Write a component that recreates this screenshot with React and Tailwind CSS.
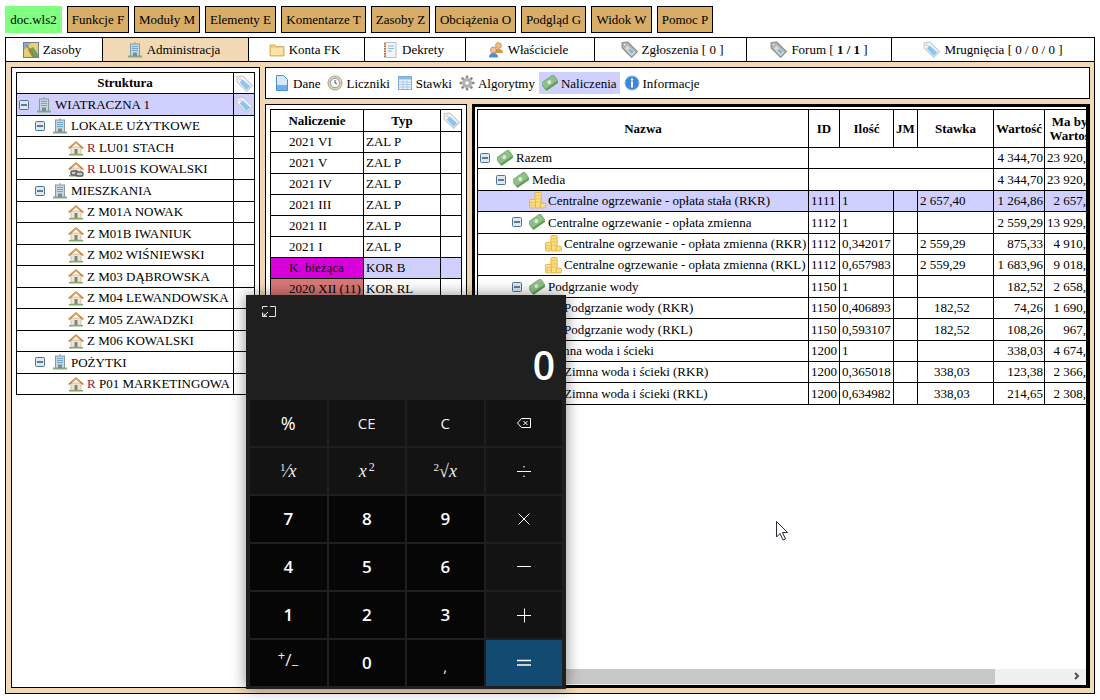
import React from 'react'

const Ground = () => <path d="M1 14h14v1.5H1z" fill="#6fae5a" />

function Building({ className = '' }) {
  return (
    <svg width="16" height="16" viewBox="0 0 16 16" className={`shrink-0 ${className}`}>
      <path d="M8 0v2" stroke="#b98a5a" />
      <path d="M1 13.500h14V15.500H1z" fill="#7fb26a" />
      <rect x="3.500" y="2" width="9" height="12" fill="#c4d6df" stroke="#8a9aa3" />
      <path d="M5 4.500h6M5 6.500h6M5 8.500h6" stroke="#6fa8cf" />
      <rect x="6" y="10.500" width="4" height="3.500" fill="#7d8a90" />
    </svg>
  )
}

function House({ chain }) {
  return (
    <svg width="16" height="16" viewBox="0 0 16 16" className="shrink-0">
      <Ground />
      <rect x="3" y="7" width="10" height="7" fill="#efe6d2" stroke="#b8a98c" strokeWidth=".6" />
      <rect x="6.500" y="9" width="3" height="5" fill="#7d8580" />
      <path d="M0 8 8 1l8 7-1.500 1L8 3.500 1.500 9z" fill="#c9843f" />
      <path d="M3 6.500 8 2l5 4.500L8 3.800z" fill="#e8b070" />
      {chain ? (
        <g fill="none" stroke="#5d6468" strokeWidth="1.400">
          <rect x="3" y="10" width="6" height="4" rx="2" fill="#c7cbcc" />
          <rect x="8" y="11" width="7" height="4" rx="2" fill="#c7cbcc" />
        </g>
      ) : null}
    </svg>
  )
}

function Coins() {
  return (
    <svg width="17" height="17" viewBox="0 0 16 16" className="-my-px -mr-px shrink-0">
      <g stroke="#e2ad35" strokeWidth=".8" fill="#fadf85">
        <rect x="5.500" y=".5" width="6" height="14.500" rx="1" />
        <rect x=".5" y="7" width="5.500" height="8" rx="1" />
        <rect x="10.500" y="10.500" width="5" height="4.500" rx="1" />
      </g>
      <path d="M6 3.500h5M6 6.500h5M6 9.500h5M1 10h4.500M1 12.500h4.500" stroke="#ebbb4a" strokeWidth=".8" />
    </svg>
  )
}

function Money() {
  return (
    <svg width="16" height="16" viewBox="0 0 16 16" className="shrink-0">
      <g transform="rotate(-35 8 8)">
        <rect x="0.500" y="6" width="15" height="6.500" fill="#659a5f" />
        <rect x="0.500" y="3" width="15" height="7.500" fill="#8fc088" stroke="#6f9f68" strokeWidth=".7" />
        <circle cx="8" cy="6.800" r="2" fill="#d5ead0" />
      </g>
    </svg>
  )
}

function Tag({ grey }) {
  return (
    <svg width="17" height="17" viewBox="0 0 16 16" className="-my-px shrink-0">
      <path
        d="M1 1.500 6.500 1 15.500 10 10 15.500 1 6.500z"
        fill={grey ? '#b0b0b0' : '#f4f6f8'}
        stroke={grey ? '#8d8d8d' : '#c6c6c6'}
        strokeLinejoin="round"
      />
      <path d="M6 4 13.500 10.500 10 14 3.500 7z" fill={grey ? '#d8d8d8' : '#8cc6f0'} />
      {grey ? <path d="M8.500 7 12 10 10 12 7 9z" fill="#7fb6de" /> : null}
      <circle cx="3.500" cy="3.500" r="1" fill="#fff" stroke="#b0b0b0" strokeWidth=".5" />
    </svg>
  )
}

function Toggle() {
  return (
    <svg width="10" height="10" viewBox="0 0 10 10" className="shrink-0">
      <rect x=".5" y=".5" width="9" height="9" rx="1" fill="#dce8f2" stroke="#4f7390" />
      <path d="M2 5h6" stroke="#1e2e3a" strokeWidth="1.200" />
    </svg>
  )
}

const MapIcon = () => (
  <svg width="16" height="16" viewBox="0 0 16 16" className="shrink-0">
    <rect x=".5" y=".5" width="15" height="15" fill="#e8d070" stroke="#77808a" />
    <path d="M1 1h7L1 8z" fill="#7cb3d8" />
    <path d="M9 15 5 8l5-3 5 7v3z" fill="#6ba55c" />
    <path d="M3 3 8 9l3 6" stroke="#d0603a" strokeWidth="1.200" fill="none" />
  </svg>
)

const Folder = () => (
  <svg width="16" height="16" viewBox="0 0 16 16" className="shrink-0">
    <path d="M1 3h5l1 1.500h8V14H1z" fill="#f3cf78" stroke="#cfa24c" strokeWidth=".8" />
    <rect x="2" y="6" width="12" height="7" fill="#fbe5a6" />
  </svg>
)

const Notebook = () => (
  <svg width="16" height="16" viewBox="0 0 16 16" className="shrink-0">
    <rect x="3" y="0.500" width="11" height="15" fill="#f5f5f2" stroke="#b9bec2" />
    <path d="M3 1v14" stroke="#b9713a" strokeWidth="2" strokeDasharray="1.500 1" />
    <path d="M6 4h6M6 6.500h6M6 9h4" stroke="#8cb4d6" strokeWidth="1.200" />
  </svg>
)

const Users = () => (
  <svg width="16" height="16" viewBox="0 0 16 16" className="shrink-0">
    <circle cx="10.500" cy="3.500" r="3" fill="#eebd8f" stroke="#b57f3d" strokeWidth=".6" />
    <path d="M6.500 11c0-3 1.500-4 4-4s4.500 1 4.500 4z" fill="#d99a3d" />
    <circle cx="5.500" cy="8" r="3" fill="#f0c49c" stroke="#a85f3a" strokeWidth=".6" />
    <path d="M1 15.500c0-3 1.500-4.500 4.500-4.500s4.500 1.500 4.500 4.500z" fill="#4f8fd0" />
  </svg>
)

const DocIcon = () => (
  <svg width="16" height="16" viewBox="0 0 16 16" className="shrink-0">
    <path d="M2.500.5h7l4 4v11h-11z" fill="#d7e9f8" stroke="#4f8fd0" />
    <rect x="3" y="10" width="10" height="5" fill="#6fb0e6" />
  </svg>
)

const ClockIcon = () => (
  <svg width="16" height="16" viewBox="0 0 16 16" className="shrink-0">
    <circle cx="8" cy="8" r="7" fill="#e7d8a8" stroke="#a8a080" />
    <circle cx="8" cy="8" r="4.700" fill="#f6f8fb" stroke="#8398b0" />
    <path d="M8 5v3l2 1" stroke="#44566a" fill="none" />
  </svg>
)

const TableIcon = () => (
  <svg width="16" height="16" viewBox="0 0 16 16" className="shrink-0">
    <rect x="1.500" y="1.500" width="13" height="13" fill="#eef5fb" stroke="#82aed4" />
    <rect x="2" y="2" width="12" height="2.500" fill="#8cbce6" />
    <path d="M2 7h12M2 9.500h12M2 12h12M6 5v9M10 5v9" stroke="#a8c8e4" />
  </svg>
)

const GearIcon = () => (
  <svg width="16" height="16" viewBox="0 0 16 16" className="shrink-0">
    <g stroke="#8d8d8d" strokeWidth="2.400">
      <path d="M8 .5v15M.5 8h15M2.700 2.700l10.600 10.600M13.300 2.700 2.700 13.300" />
    </g>
    <circle cx="8" cy="8" r="5" fill="#b5b5b5" />
    <circle cx="8" cy="8" r="2.300" fill="#fff" stroke="#8d8d8d" strokeWidth=".6" />
  </svg>
)

const InfoIcon = () => (
  <svg width="16" height="16" viewBox="0 0 16 16" className="shrink-0">
    <circle cx="8" cy="8" r="7" fill="#3f86d8" stroke="#8ab6e6" />
    <circle cx="8" cy="4.500" r="1.200" fill="#fff" />
    <rect x="7" y="6.500" width="2" height="6" fill="#fff" />
  </svg>
)

const menu = [
  ['Funkcje F', 'w-[62px]'],
  ['Moduły M', 'w-[66px]'],
  ['Elementy E', 'w-[71px]'],
  ['Komentarze T', 'w-[85px]'],
  ['Zasoby Z', 'w-[59px]'],
  ['Obciążenia O', 'w-[81px]'],
  ['Podgląd G', 'w-[65px]'],
  ['Widok W', 'w-[61px]'],
  ['Pomoc P', 'w-[56px]'],
]

const tabs = [
  { label: 'Zasoby', icon: <MapIcon />, w: 'w-[97px] pr-[4px]' },
  { label: 'Administracja', icon: <Building />, w: 'w-[146px] pr-[4px]', active: true },
  { label: 'Konta FK', icon: <Folder />, w: 'w-[116px] pr-[4px]' },
  { label: 'Dekrety', icon: <Notebook />, w: 'w-[101px] pr-[4px]' },
  { label: 'Właściciele', icon: <Users />, w: 'w-[129px] pr-[4px]' },
  { label: <>Zgłoszenia [ 0 ]</>, icon: <Tag grey />, w: 'w-[152px] pl-[3px]' },
  { label: <>Forum [ <b>1 / 1</b> ]</>, icon: <Tag grey />, w: 'w-[145px]' },
  { label: <>Mrugnięcia [ 0 / 0 / 0 ]</>, icon: <Tag />, w: 'flex-1' },
]

const tools = [
  { label: 'Dane', icon: <DocIcon /> },
  { label: 'Liczniki', icon: <ClockIcon /> },
  { label: 'Stawki', icon: <TableIcon /> },
  { label: 'Algorytmy', icon: <GearIcon /> },
  { label: 'Naliczenia', icon: <Money />, active: true },
  { label: 'Informacje', icon: <InfoIcon /> },
]

const tree = [
  { level: 0, toggle: true, icon: <Building />, text: 'WIATRACZNA 1', selected: true },
  { level: 1, toggle: true, icon: <Building />, text: 'LOKALE UŻYTKOWE' },
  { level: 2, icon: <House />, r: 'R', text: 'LU01 STACH' },
  { level: 2, icon: <House chain />, r: 'R', text: 'LU01S KOWALSKI' },
  { level: 1, toggle: true, icon: <Building />, text: 'MIESZKANIA' },
  { level: 2, icon: <House />, text: 'Z M01A NOWAK' },
  { level: 2, icon: <House />, text: 'Z M01B IWANIUK' },
  { level: 2, icon: <House />, text: 'Z M02 WIŚNIEWSKI' },
  { level: 2, icon: <House />, text: 'Z M03 DĄBROWSKA' },
  { level: 2, icon: <House />, text: 'Z M04 LEWANDOWSKA' },
  { level: 2, icon: <House />, text: 'Z M05 ZAWADZKI' },
  { level: 2, icon: <House />, text: 'Z M06 KOWALSKI' },
  { level: 1, toggle: true, icon: <Building />, text: 'POŻYTKI' },
  { level: 2, icon: <House />, r: 'R', text: 'P01 MARKETINGOWA' },
]

const periods = [
  ['2021 VI', 'ZAL P'],
  ['2021 V', 'ZAL P'],
  ['2021 IV', 'ZAL P'],
  ['2021 III', 'ZAL P'],
  ['2021 II', 'ZAL P'],
  ['2021 I', 'ZAL P'],
  ['K. bieżąca', 'KOR B', 'bg-[#d800d8]', 'bg-[#d0d0ff]'],
  ['2020 XII (11)', 'KOR RL', 'bg-[#d87878]', ''],
]

const charges = [
  { level: 0, toggle: true, icon: <Money />, name: 'Razem', total: '4 344,70', due: '23 920,05', merged: true },
  { level: 1, toggle: true, icon: <Money />, name: 'Media', total: '4 344,70', due: '23 920,05', merged: true },
  { level: 2, icon: <Coins />, name: 'Centralne ogrzewanie - opłata stała (RKR)', id: '1111', qty: '1', rate: '2 657,40', total: '1 264,86', due: '2 657,40', selected: true },
  { level: 2, toggle: true, icon: <Money />, name: 'Centralne ogrzewanie - opłata zmienna', id: '1112', qty: '1', total: '2 559,29', due: '13 929,24' },
  { level: 3, icon: <Coins />, name: 'Centralne ogrzewanie - opłata zmienna (RKR)', id: '1112', qty: '0,342017', rate: '2 559,29', total: '875,33', due: '4 910,58' },
  { level: 3, icon: <Coins />, name: 'Centralne ogrzewanie - opłata zmienna (RKL)', id: '1112', qty: '0,657983', rate: '2 559,29', total: '1 683,96', due: '9 018,66' },
  { level: 2, toggle: true, icon: <Money />, name: 'Podgrzanie wody', id: '1150', qty: '1', total: '182,52', due: '2 658,10' },
  { level: 3, icon: <Coins />, name: 'Podgrzanie wody (RKR)', id: '1150', qty: '0,406893', rate: '182,52', short: true, total: '74,26', due: '1 690,62' },
  { level: 3, icon: <Coins />, name: 'Podgrzanie wody (RKL)', id: '1150', qty: '0,593107', rate: '182,52', short: true, total: '108,26', due: '967,48' },
  { level: 2, toggle: true, icon: <Money />, name: 'Zimna woda i ścieki', id: '1200', qty: '1', total: '338,03', due: '4 674,91' },
  { level: 3, icon: <Coins />, name: 'Zimna woda i ścieki (RKR)', id: '1200', qty: '0,365018', rate: '338,03', short: true, total: '123,38', due: '2 366,20' },
  { level: 3, icon: <Coins />, name: 'Zimna woda i ścieki (RKL)', id: '1200', qty: '0,634982', rate: '338,03', short: true, total: '214,65', due: '2 308,71' },
]

const indent = ['pl-[2px]', 'pl-[18px]', 'pl-[34px]', 'pl-[50px]']
const cell = 'border border-black p-0 whitespace-nowrap overflow-hidden'

function TreeLabel({ level, toggle, icon, children }) {
  return (
    <div className={`flex items-center ${indent[level]}`}>
      <span className="flex w-[17px] shrink-0 items-center">{toggle ? <Toggle /> : null}</span>
      {icon}
      <span className="ml-[3px]">{children}</span>
    </div>
  )
}

// okno kalkulatora
const lineIcon = 'h-4 w-4 text-white'
const calcKeys = [
  { label: <span className="text-[18px] text-white">%</span>, kind: 'fn' },
  { label: 'CE', kind: 'fn' },
  { label: 'C', kind: 'fn' },
  {
    kind: 'fn',
    label: (
      <svg viewBox="0 0 16 16" className={lineIcon} fill="none" stroke="currentColor">
        <path d="M5.500 3.500h9v9h-9L1.500 8z" />
        <path d="m7.500 6 4 4m0-4-4 4" />
      </svg>
    ),
  },
  { kind: 'fn', label: <span className="font-['Liberation_Serif',serif] text-[18px]"><sup className="text-[11px]">1</sup>⁄<i>x</i></span> },
  { kind: 'fn', label: <span className="font-['Liberation_Serif',serif] text-[18px]"><i>x</i><sup className="ml-[2px] text-[12px]">2</sup></span> },
  { kind: 'fn', label: <span className="font-['Liberation_Serif',serif] text-[18px]"><sup className="text-[11px]">2</sup>√<i>x</i></span> },
  {
    kind: 'fn',
    label: (
      <svg viewBox="0 0 16 16" className={lineIcon} fill="none" stroke="currentColor">
        <path d="M1 8.500h14" />
        <circle cx="8" cy="3.800" r=".8" fill="currentColor" stroke="none" />
        <circle cx="8" cy="13.200" r=".8" fill="currentColor" stroke="none" />
      </svg>
    ),
  },
  { label: '7' },
  { label: '8' },
  { label: '9' },
  {
    kind: 'fn',
    label: (
      <svg viewBox="0 0 16 16" className={lineIcon} fill="none" stroke="currentColor">
        <path d="m2.500 2.500 11 11m0-11-11 11" />
      </svg>
    ),
  },
  { label: '4' },
  { label: '5' },
  { label: '6' },
  {
    kind: 'fn',
    label: (
      <svg viewBox="0 0 16 16" className={lineIcon} fill="none" stroke="currentColor">
        <path d="M1 7.500h14" />
      </svg>
    ),
  },
  { label: '1' },
  { label: '2' },
  { label: '3' },
  {
    kind: 'fn',
    label: (
      <svg viewBox="0 0 16 16" className={lineIcon} fill="none" stroke="currentColor">
        <path d="M1 8.500h14M8.500 1.500v14" />
      </svg>
    ),
  },
  { kind: 'num', thin: true, label: <span className="-mt-[6px] text-[17px]"><sup className="text-[13px]">+</sup>/<sub className="text-[13px]">−</sub></span> },
  { label: '0' },
  { kind: 'num', thin: true, label: <span className="pt-[7px] text-[15px]">,</span> },
  {
    kind: 'eq',
    label: (
      <svg viewBox="0 0 16 16" className={lineIcon} fill="none" stroke="currentColor" strokeWidth="1.500">
        <path d="M1 5.500h14M1 10h14" />
      </svg>
    ),
  },
]

function Calculator() {
  return (
    <div className="absolute left-[246px] top-[295px] flex h-[394px] w-[320px] flex-col bg-[#1f1f1f] px-1 pb-[3px] font-['Open_Sans',sans-serif] text-white shadow-[0_0_14px_rgba(0,0,0,0.45)]">
      <div className="relative h-[105px] shrink-0">
        <svg width="14" height="13" viewBox="0 0 14 13" className="absolute left-[12px] top-[10px]" fill="none" stroke="#e6e6e6">
          <path d="M.5 4V1.500h5M8 1.500h5.500v10H7M.5 7.500v4h4.500M6 7 2 11M2 8.500V11h2.500" />
        </svg>
        <div className="absolute bottom-[16px] right-[7px] text-[39px] font-semibold leading-none">0</div>
      </div>
      <div className="grid flex-1 grid-cols-4 grid-rows-6 gap-[2px]">
        {calcKeys.map((k, i) => (
          <div
            key={i}
            className={
              'flex items-center justify-center ' +
              (k.kind === 'fn'
                ? 'bg-[#131313] text-[15px] text-[#eeeeee]'
                : k.kind === 'eq'
                  ? 'bg-[#134a72]'
                  : k.thin
                    ? 'bg-[#060606] text-[#eeeeee]'
                    : 'bg-[#060606] text-[17px] font-semibold')
            }
          >
            {k.label}
          </div>
        ))}
      </div>
    </div>
  )
}

export default function App() {
  return (
    <div className="relative h-[700px] w-[1100px] overflow-hidden bg-white font-['Liberation_Serif',serif] text-[13px] text-black">
      <div className="flex h-[37px] items-start gap-[5px] px-[5px] pt-[6px]">
        <div className="flex h-[27px] w-[57px] items-center justify-center bg-[#80ff80]">doc.wls2</div>
        {menu.map(([label, w]) => (
          <div key={label} className={`flex h-[27px] items-center justify-center border border-black bg-[#d8ad68] ${w}`}>
            {label}
          </div>
        ))}
      </div>

      <div className="mx-[5px] flex h-[25px] border border-black">
        {tabs.map((t, i) => (
          <div
            key={i}
            className={`flex items-center justify-center gap-[4px] border-r border-black last:border-r-0 ${t.w} ${t.active ? 'bg-[#f2d9b5]' : ''}`}
          >
            {t.icon}
            <span>{t.label}</span>
          </div>
        ))}
      </div>

      <div className="mx-[5px] flex h-[632px] gap-[5px] border border-t-0 border-black bg-[#f2d9b5] py-[5px] pl-[5px] pr-[4px]">
        <div className="w-[249px] shrink-0 border border-black bg-white pl-[4px] pt-[4px]">
          <table className="w-[239px] table-fixed border-collapse">
            <colgroup>
              <col className="w-[217px]" />
              <col />
            </colgroup>
            <tbody>
              <tr className="h-[21.47px]">
                <th className={`${cell} text-center`}>Struktura</th>
                <td className={cell}><div className="flex justify-center"><Tag /></div></td>
              </tr>
              {tree.map((row) => (
                <tr key={row.text} className={`h-[21.47px] ${row.selected ? 'bg-[#d0d0ff]' : ''}`}>
                  <td className={cell}>
                    <TreeLabel level={row.level} toggle={row.toggle} icon={row.icon}>
                      {row.r ? <span className="text-[#a01030]">{row.r} </span> : null}
                      {row.text}
                    </TreeLabel>
                  </td>
                  <td className={cell}>{row.selected ? <div className="flex justify-center"><Tag /></div> : null}</td>
                </tr>
              ))}
            </tbody>
          </table>
        </div>

        <div className="flex min-w-0 flex-1 flex-col gap-[5px]">
          <div className="flex h-[32px] shrink-0 items-center gap-px border border-black bg-white pl-[5px]">
            {tools.map((t) => (
              <div key={t.label} className={`flex h-[22px] items-center gap-[3px] px-[3px] ${t.active ? 'bg-[#d0d0ff]' : ''}`}>
                {t.icon}
                <span className="pt-px">{t.label}</span>
              </div>
            ))}
          </div>

          <div className="flex min-h-0 flex-1 gap-[5px]">
            <div className="w-[202px] shrink-0 border border-black bg-white pl-[4px] pt-[4px]">
              <table className="w-[192px] table-fixed border-collapse">
                <colgroup>
                  <col className="w-[93px]" />
                  <col className="w-[77px]" />
                  <col />
                </colgroup>
                <tbody>
                  <tr className="h-[22px]">
                    <th className={`${cell} text-center`}>Naliczenie</th>
                    <th className={`${cell} text-center`}>Typ</th>
                    <td className={cell}><div className="flex justify-center"><Tag /></div></td>
                  </tr>
                  {periods.map(([name, type, bg, rowBg]) => (
                    <tr key={name} className={`h-[21px] ${rowBg || ''}`}>
                      <td className={`${cell} pl-[18px] ${bg || ''}`}>{name}</td>
                      <td className={`${cell} pl-[2px]`}>{type}</td>
                      <td className={cell} />
                    </tr>
                  ))}
                </tbody>
              </table>
            </div>

            <div className="relative min-w-0 flex-1 overflow-hidden border-[3px] border-r-[4px] border-black bg-white pl-[2px] pt-[2px]">
              <table className="w-[623px] table-fixed border-collapse">
                <colgroup>
                  <col className="w-[331px]" />
                  <col className="w-[31px]" />
                  <col className="w-[54px]" />
                  <col className="w-[24px]" />
                  <col className="w-[76px]" />
                  <col className="w-[51px]" />
                  <col className="w-[56px]" />
                </colgroup>
                <thead>
                  <tr className="h-[38px]">
                    {['Nazwa', 'ID', 'Ilość', 'JM', 'Stawka', 'Wartość'].map((h) => (
                      <th key={h} className={`${cell} text-center`}>{h}</th>
                    ))}
                    <th className={`${cell} text-center leading-[14px]`}>Ma być<br />Wartość</th>
                  </tr>
                </thead>
                <tbody>
                  {charges.map((c) => (
                    <tr key={c.name} className={`h-[21.4px] ${c.selected ? 'bg-[#d0d0ff]' : ''}`}>
                      <td className={cell}>
                        <TreeLabel level={c.level} toggle={c.toggle} icon={c.icon}>{c.name}</TreeLabel>
                      </td>
                      {c.merged ? (
                        <td colSpan={4} className={cell} />
                      ) : (
                        <>
                          <td className={`${cell} pl-[2px]`}>{c.id}</td>
                          <td className={`${cell} pl-[2px]`}>{c.qty}</td>
                          <td className={cell} />
                          <td className={`${cell} ${c.short ? 'pl-[16px]' : 'pl-[2px]'}`}>{c.rate}</td>
                        </>
                      )}
                      <td className={`${cell} pr-[1px] text-right`}>{c.total}</td>
                      <td className={`${cell} pr-[1px] text-right`}>{c.due}</td>
                    </tr>
                  ))}
                </tbody>
              </table>

              <div className="absolute bottom-0 left-0 right-0 flex h-[16px] bg-[#f0f0f0]">
                <div className="ml-[17px] h-[15px] w-[503px] bg-[#c8c8c8]" />
                <svg width="8" height="8" viewBox="0 0 8 8" className="absolute right-[5px] top-[3px]" fill="none" stroke="#505050" strokeWidth="2">
                  <path d="m2 1 3 3-3 3" />
                </svg>
              </div>
            </div>
          </div>
        </div>
      </div>

      <Calculator />

      {/* kursor */}
      <svg width="14" height="21" viewBox="0 0 14 21" className="absolute left-[776px] top-[521px]" fill="#fff" stroke="#222b35" strokeWidth="1">
        <path d="M.5.500V16l3.500-3.500 3 6.500 2.500-1-3-6.500h5z" />
      </svg>
    </div>
  )
}
